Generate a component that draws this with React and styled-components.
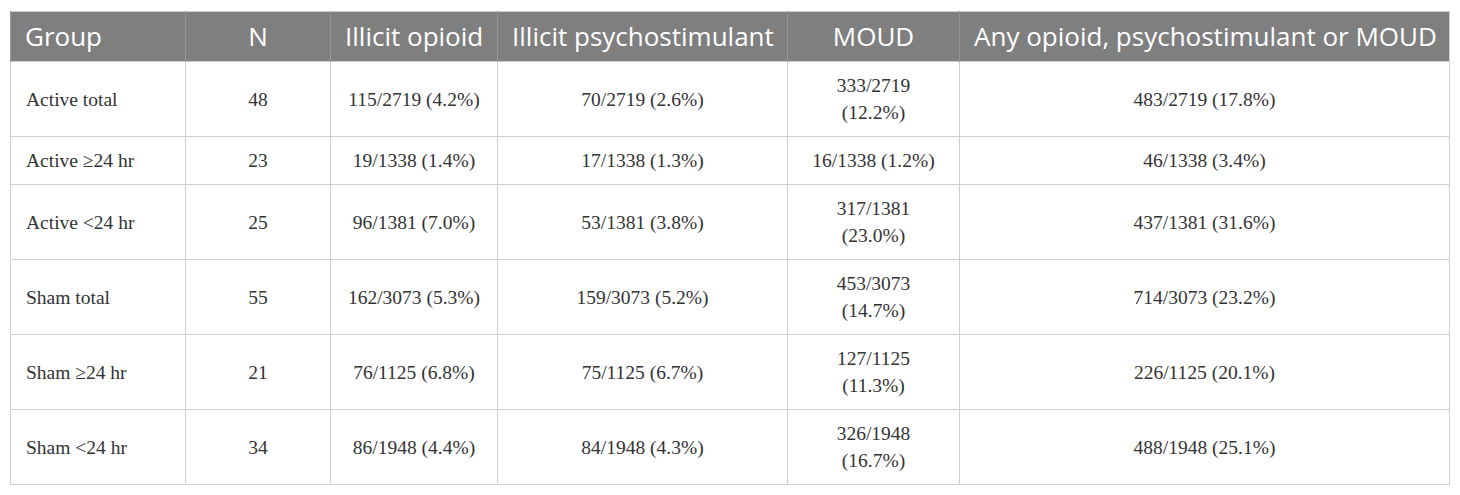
import React from "react";
import styled, { createGlobalStyle } from "styled-components";

const GlobalStyle = createGlobalStyle`
  html, body {
    margin: 0;
    padding: 0;
    background: #ffffff;
  }
`;

const Page = styled.div`
  padding: 11px 11px 0 10px;
`;

const Table = styled.table`
  width: 1439px;
  border-collapse: collapse;
  table-layout: fixed;
  border: 1px solid #cfcfcf;
`;

const HeadCell = styled.th`
  background: #7f7f7f;
  color: #ffffff;
  font-family: "Open Sans", "Noto Sans", sans-serif;
  font-weight: 400;
  font-size: 26px;
  line-height: 29px;
  padding: 10px 14px;
  text-align: ${(p) => (p.$left ? "left" : "center")};
  border-left: 1px solid #959595;
  white-space: nowrap;
  height: 29px;
`;

const Cell = styled.td`
  font-family: "Liberation Serif", "Times New Roman", serif;
  font-size: 19.5px;
  line-height: 27px;
  color: #333333;
  padding: 10px 15px;
  text-align: ${(p) => (p.$left ? "left" : "center")};
  vertical-align: middle;
  white-space: pre-line;
  border: 1px solid #cfcfcf;
`;

const columns = [
  { title: "Group", width: 175, left: true },
  { title: "N", width: 145 },
  { title: "Illicit opioid", width: 167 },
  { title: "Illicit psychostimulant", width: 290 },
  { title: "MOUD", width: 172 },
  { title: "Any opioid, psychostimulant or MOUD", width: 490 },
];

const rows = [
  ["Active total", "48", "115/2719 (4.2%)", "70/2719 (2.6%)", "333/2719\n(12.2%)", "483/2719 (17.8%)"],
  ["Active \u226524 hr", "23", "19/1338 (1.4%)", "17/1338 (1.3%)", "16/1338 (1.2%)", "46/1338 (3.4%)"],
  ["Active <24 hr", "25", "96/1381 (7.0%)", "53/1381 (3.8%)", "317/1381\n(23.0%)", "437/1381 (31.6%)"],
  ["Sham total", "55", "162/3073 (5.3%)", "159/3073 (5.2%)", "453/3073\n(14.7%)", "714/3073 (23.2%)"],
  ["Sham \u226524 hr", "21", "76/1125 (6.8%)", "75/1125 (6.7%)", "127/1125\n(11.3%)", "226/1125 (20.1%)"],
  ["Sham <24 hr", "34", "86/1948 (4.4%)", "84/1948 (4.3%)", "326/1948\n(16.7%)", "488/1948 (25.1%)"],
];

export default function App() {
  return (
    <Page>
      <GlobalStyle />
      <Table>
        <colgroup>
          {columns.map((c) => (
            <col key={c.title} style={{ width: c.width }} />
          ))}
        </colgroup>
        <thead>
          <tr>
            {columns.map((c) => (
              <HeadCell key={c.title} $left={c.left}>
                {c.title}
              </HeadCell>
            ))}
          </tr>
        </thead>
        <tbody>
          {rows.map((r) => (
            <tr key={r[0]}>
              {r.map((v, i) => (
                <Cell key={i} $left={i === 0}>
                  {v}
                </Cell>
              ))}
            </tr>
          ))}
        </tbody>
      </Table>
    </Page>
  );
}
